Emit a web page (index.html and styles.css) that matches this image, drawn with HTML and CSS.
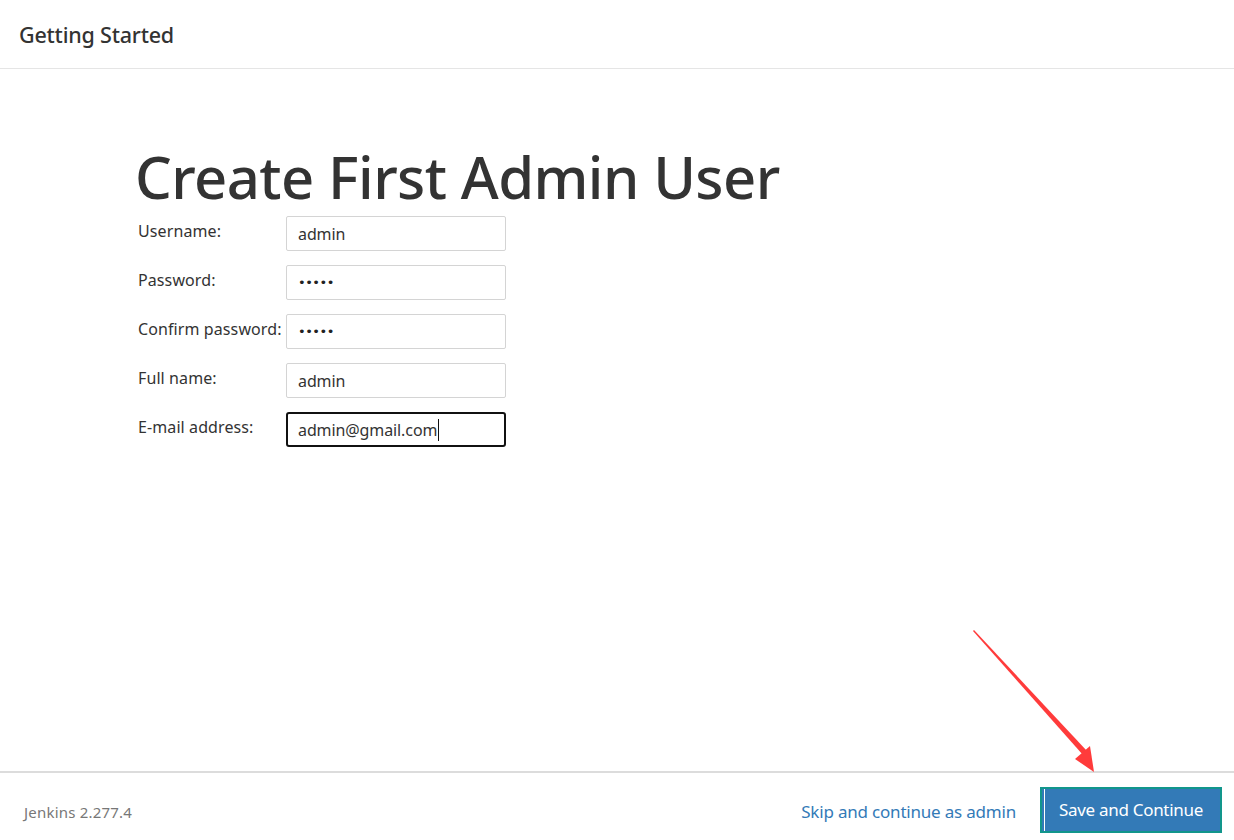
FILE: index.html
```html
<!DOCTYPE html>
<html lang="en">
  <head>
    <meta charset="UTF-8" />
    <title>Getting Started</title>
    <link rel="stylesheet" href="styles.css">
  </head>
  <body>
    <div class="wizard">
      <div class="wizard__header">
        <h4 class="wizard__title">Getting Started</h4>
      </div>

      <div class="wizard__body">
        <h1 class="setup__heading">Create First Admin User</h1>
        <form class="setup__form">
          <div class="field">
            <label class="field__label">Username:</label>
            <input class="field__input" type="text" value="admin" />
          </div>
          <div class="field">
            <label class="field__label">Password:</label>
            <input class="field__input" type="password" value="admin" />
          </div>
          <div class="field">
            <label class="field__label">Confirm password:</label>
            <input class="field__input" type="password" value="admin" />
          </div>
          <div class="field">
            <label class="field__label">Full name:</label>
            <input class="field__input" type="text" value="admin" />
          </div>
          <div class="field">
            <label class="field__label">E-mail address:</label>
            <div class="field__input field__input--focus">admin@gmail.com<span class="caret"></span></div>
          </div>
        </form>

        <svg class="pointer" width="140" height="150" viewBox="0 0 140 150">
          <polygon points="1,1 2,0 115,121 111,125" fill="#ff3b3b" />
          <polygon points="122,142 103,129 118,116" fill="#ff3b3b" />
        </svg>
      </div>

      <div class="wizard__footer">
        <span class="version">Jenkins 2.277.4</span>
        <div class="footer__actions">
          <a class="skip-link" href="#">Skip and continue as admin</a>
          <button class="btn-save" type="button">Save and Continue</button>
        </div>
      </div>
    </div>
  </body>
</html>
```

FILE: styles.css
```css
* {
  padding: 0;
  margin: 0;
  box-sizing: border-box;
}

body {
  background-color: white;
  font-family: "Noto Sans", "Open Sans", sans-serif;
  color: #333;
  height: 840px;
  overflow: hidden;
}

.wizard {
  display: flex;
  flex-direction: column;
  height: 840px;
}

.wizard__header {
  height: 69px;
  border-bottom: 1px solid #e5e5e5;
  padding: 21px 19px 0;
}

.wizard__title {
  font-size: 21.5px;
  font-weight: 500;
  color: #333;
  line-height: 28px;
  letter-spacing: -0.2px;
}

.wizard__body {
  flex: 1;
  position: relative;
  padding: 71px 0 0 135px;
}

.setup__heading {
  font-size: 58px;
  font-weight: 500;
  line-height: 74px;
  letter-spacing: -0.6px;
  color: #333;
}

.setup__form {
  display: flex;
  flex-direction: column;
  gap: 14px;
  padding-left: 3px;
  margin-top: 2px;
}

.field {
  display: flex;
  align-items: flex-start;
}

.field__label {
  width: 148px;
  font-size: 16px;
  line-height: 20px;
  padding-top: 5px;
  color: #333;
  letter-spacing: 0.1px;
  white-space: nowrap;
}

.field__input {
  width: 220px;
  height: 35px;
  border: 1px solid #d4d4d4;
  border-radius: 2px;
  padding: 0 11px;
  font-family: inherit;
  font-size: 16px;
  color: #333;
  outline: none;
  letter-spacing: -0.1px;
}

input[type="password"].field__input {
  font-family: "DejaVu Sans", sans-serif;
  font-size: 13px;
  letter-spacing: -0.5px;
  color: #222;
}

.field__input--focus {
  display: flex;
  align-items: center;
  border: 2px solid #111;
  border-radius: 3px;
  padding: 0 10px;
}

.caret {
  display: inline-block;
  width: 1px;
  height: 22px;
  margin-left: 1px;
  background-color: #111;
}

.pointer {
  position: absolute;
  left: 972px;
  top: 561px;
}

.wizard__footer {
  height: 69px;
  border-top: 2px solid #dcdcdc;
  display: flex;
  align-items: center;
  justify-content: space-between;
  padding: 10px 12px 0 24px;
}

.version {
  font-size: 15px;
  color: #777;
  letter-spacing: 0.2px;
}

.footer__actions {
  display: flex;
  align-items: center;
  gap: 24px;
}

.skip-link {
  font-size: 17px;
  color: #337ab7;
  text-decoration: none;
  letter-spacing: -0.2px;
}

.btn-save {
  width: 182px;
  height: 46px;
  margin-top: -4px;
  background-color: #337ab7;
  color: white;
  font-family: inherit;
  font-size: 17px;
  border: 2px solid #12968c;
  box-shadow: inset 2px 0 0 #337ab7, inset 3px 0 0 white;
  letter-spacing: -0.3px;
  cursor: pointer;
}
```
